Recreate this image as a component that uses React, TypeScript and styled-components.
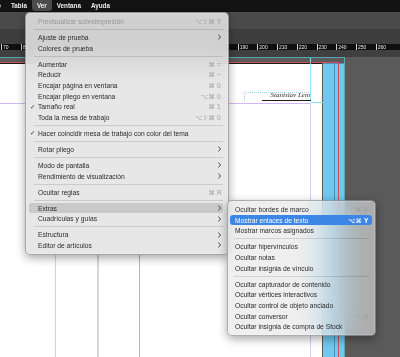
import React from 'react';
import styled, { createGlobalStyle } from 'styled-components';

const GlobalStyle = createGlobalStyle`
  html, body { margin: 0; padding: 0; }
  body {
    width: 400px;
    height: 357px;
    overflow: hidden;
    background: #5a5a5a;
    font-family: "Liberation Sans", Arial, "DejaVu Sans", sans-serif;
  }
`;

type Entry =
  | { sep: true }
  | {
      label: string;
      keys?: [string, string];
      sub?: boolean;
      check?: boolean;
      disabled?: boolean;
      active?: boolean;
    };

const SEP: Entry = { sep: true };

const viewMenu: Entry[] = [
  { label: 'Previsualizar sobreimpresión', keys: ['⌥⇧⌘', 'Y'], disabled: true },
  SEP,
  { label: 'Ajuste de prueba', sub: true },
  { label: 'Colores de prueba' },
  SEP,
  { label: 'Aumentar', keys: ['⌘', '='] },
  { label: 'Reducir', keys: ['⌘', '−'] },
  { label: 'Encajar página en ventana', keys: ['⌘', '0'] },
  { label: 'Encajar pliego en ventana', keys: ['⌥⌘', '0'] },
  { label: 'Tamaño real', keys: ['⌘', '1'], check: true },
  { label: 'Toda la mesa de trabajo', keys: ['⌥⇧⌘', '0'] },
  SEP,
  { label: 'Hacer coincidir mesa de trabajo con color del tema', check: true },
  SEP,
  { label: 'Rotar pliego', sub: true },
  SEP,
  { label: 'Modo de pantalla', sub: true },
  { label: 'Rendimiento de visualización', sub: true },
  SEP,
  { label: 'Ocultar reglas', keys: ['⌘', 'R'] },
  SEP,
  { label: 'Extras', sub: true, active: true },
  { label: 'Cuadrículas y guías', sub: true },
  SEP,
  { label: 'Estructura', sub: true },
  { label: 'Editor de artículos', sub: true },
];

const extrasMenu: Entry[] = [
  { label: 'Ocultar bordes de marco', keys: ['^⌘', 'H'] },
  { label: 'Mostrar enlaces de texto', keys: ['⌥⌘', 'Y'], active: true },
  { label: 'Mostrar marcos asignados' },
  SEP,
  { label: 'Ocultar hipervínculos' },
  { label: 'Ocultar notas' },
  { label: 'Ocultar insignia de vínculo' },
  SEP,
  { label: 'Ocultar capturador de contenido' },
  { label: 'Ocultar vértices interactivos' },
  { label: 'Ocultar control de objeto anclado' },
  { label: 'Ocultar conversor', keys: ['⌥', 'B'] },
  { label: 'Ocultar insignia de compra de Stock' },
];

// ruler labels; the ones hidden under the open menu are left blank
const rulerMarks = Array.from({ length: 20 }, (_, i) => 70 + i * 10).map(m =>
  m > 80 && m < 190 ? '' : String(m)
);

// guides on the page: x, y (page coords), width, height, colour
const guides = [
  { x: 0, y: 39, w: 310, h: 1, c: '#d3b9f1' },
  { x: 55, y: 39, w: 1, h: 400, c: '#c6d4fb' },
  { x: 97, y: 39, w: 2, h: 400, c: '#d6d6d6' },
  { x: 139, y: 39, w: 1, h: 400, c: '#bda4ef' },
  { x: 310, y: 39, w: 1, h: 400, c: '#dacdf4' },
  { x: 310, y: -6, w: 1, h: 44, c: '#8fe3f2' },
  { x: 311, y: 38, w: 24, h: 1, c: '#8fe3f2' },
];

const Screen = styled.div`
  position: relative;
  width: 400px;
  height: 357px;
  display: flex;
  flex-direction: column;
  overflow: hidden;
`;

const MenuBar = styled.div`
  flex: none;
  height: 12px;
  background: #131313;
  display: flex;
  align-items: flex-start;
`;

const BarItem = styled.div<{ $active?: boolean }>`
  height: 11px;
  line-height: 11px;
  padding: 0 5px;
  font-size: 6.3px;
  font-weight: 700;
  color: #ededed;
  border-radius: 0 0 3px 3px;
  background: ${p => (p.$active ? '#4c4c4c' : 'transparent')};
  &:first-child {
    margin-left: -24px;
  }
`;

const ControlBar = styled.div`
  flex: none;
  height: 17px;
  background: #4b4b4b;
`;

const ToolStrip = styled.div`
  flex: none;
  height: 15px;
  background: #3e3e3e;
`;

const Ruler = styled.div`
  flex: none;
  height: 13px;
  background: #3f3f3f;
  display: flex;
  flex-direction: column;
`;

const RulerNumbers = styled.div`
  height: 6px;
  background: #0f0f0f;
  display: flex;
  padding-left: 1px;
`;

const RulerCell = styled.div`
  flex: none;
  width: 19.72px;
  box-sizing: border-box;
  border-left: 1px solid #cfcfcf;
  padding-left: 1px;
  font-size: 5px;
  line-height: 6px;
  color: #e8e8e8;
`;

const Canvas = styled.div`
  position: relative;
  flex: 1;
  background: #5a5a5a;
`;

const Slug = styled.div`
  position: absolute;
  left: -20px;
  top: 0;
  width: 365px;
  bottom: 0;
  border-top: 1px solid #5fa6b4;
  border-right: 1px solid #5fa6b4;
  box-sizing: border-box;
`;

const Bleed = styled.div`
  position: absolute;
  left: -20px;
  top: 5px;
  width: 359px;
  bottom: 0;
  border-top: 1px solid #c9505e;
  border-right: 1px solid #c9505e;
  box-sizing: border-box;
  z-index: 2;
`;

const Page = styled.div`
  position: absolute;
  left: 0;
  top: 6px;
  width: 322px;
  bottom: 0;
  background: #ffffff;
  border-top: 1px solid #1c1c1c;
  box-sizing: border-box;
`;

const BlueFrame = styled.div`
  position: absolute;
  left: 323px;
  top: 6px;
  width: 21px;
  bottom: 0;
  background: #70c7ef;
  border-top: 1px solid #4f8fb0;
  box-sizing: border-box;
  &::after {
    content: '';
    position: absolute;
    left: 11px;
    top: 0;
    bottom: 0;
    width: 1px;
    background: #4f93b8;
  }
`;

const Guide = styled.div`
  position: absolute;
`;

const TextFrame = styled.div`
  position: absolute;
  left: 244px;
  top: 28px;
  width: 67px;
  height: 9px;
  border-top: 1px dotted #9fd2ea;
  border-left: 1px dotted #9fd2ea;
  box-sizing: border-box;
  display: flex;
  justify-content: flex-end;
  align-items: flex-end;
`;

const Author = styled.span`
  font-family: "Liberation Serif", "Times New Roman", serif;
  font-style: italic;
  font-size: 7px;
  line-height: 7px;
  color: #2e2e2e;
  padding: 0 1px 1px 0;
  border-bottom: 1px solid #1f1f1f;
  width: 48px;
  text-align: right;
`;

const Menu = styled.div<{ $left: number; $top: number; $width: number; $alpha: number }>`
  position: absolute;
  left: ${p => p.$left}px;
  top: ${p => p.$top}px;
  width: ${p => p.$width}px;
  padding: 3px 0;
  box-sizing: border-box;
  border-radius: 5px;
  background: rgba(228, 228, 228, ${p => p.$alpha});
  backdrop-filter: blur(14px) saturate(1.2);
  -webkit-backdrop-filter: blur(14px) saturate(1.2);
  border: 0.5px solid rgba(0, 0, 0, 0.28);
  box-shadow: 0 3px 10px rgba(0, 0, 0, 0.35), inset 0 0 0 0.5px rgba(255, 255, 255, 0.35);
  z-index: 10;
`;

const Row = styled.div<{ $sub?: boolean; $active?: boolean; $disabled?: boolean }>`
  position: relative;
  height: 10.7px;
  display: flex;
  align-items: center;
  margin: ${p => (p.$sub ? '0 3px 0 2px' : '0 5px 0 3px')};
  padding: ${p => (p.$sub ? '0 3px 0 5px' : '0 1px 0 9px')};
  border-radius: 3px;
  font-size: 6.7px;
  white-space: nowrap;
  background: ${p => (p.$active ? (p.$sub ? '#3c86e6' : 'rgba(0,0,0,0.13)') : 'transparent')};
  color: ${p => (p.$sub && p.$active ? '#ffffff' : p.$disabled ? '#959595' : '#2a2a2a')};
`;

const Check = styled.span`
  position: absolute;
  left: 1px;
  font-size: 6.4px;
  font-weight: 700;
  color: #2a2a2a;
  font-family: "DejaVu Sans", sans-serif;
`;

const Keys = styled.span<{ $active?: boolean }>`
  margin-left: auto;
  display: flex;
  align-items: center;
  font-family: "DejaVu Sans", sans-serif;
  font-size: 6.2px;
  letter-spacing: 0.4px;
  color: ${p => (p.$active ? '#ffffff' : '#9c9c9c')};
  font-weight: ${p => (p.$active ? 700 : 400)};
`;

const KeyChar = styled.span`
  width: 5px;
  margin-left: 2px;
  text-align: left;
  font-family: "Liberation Sans", sans-serif;
  font-size: 6.6px;
`;

const Chevron = styled.svg`
  margin-left: auto;
  margin-right: 1px;
  width: 3px;
  height: 6px;
`;

const Separator = styled.div<{ $sub?: boolean }>`
  height: 5.3px;
  display: flex;
  align-items: center;
  margin: ${p => (p.$sub ? '0 6px' : '0 5px 0 8px')};
  &::after {
    content: '';
    flex: 1;
    height: 1px;
    background: rgba(0, 0, 0, 0.12);
  }
`;

function MenuList({ entries, sub }: { entries: Entry[]; sub?: boolean }) {
  return (
    <>
      {entries.map((e, i) => {
        if ('sep' in e) return <Separator key={i} $sub={sub} />;
        return (
          <Row key={i} $sub={sub} $active={e.active} $disabled={e.disabled}>
            {e.check && <Check>✓</Check>}
            {e.label}
            {e.keys && (
              <Keys $active={e.active}>
                {e.keys[0]}
                <KeyChar>{e.keys[1]}</KeyChar>
              </Keys>
            )}
            {e.sub && (
              <Chevron viewBox="0 0 3 6">
                <polyline points="0.4,0.5 2.5,3 0.4,5.5" fill="none" stroke="#3a3a3a" strokeWidth="0.9" />
              </Chevron>
            )}
          </Row>
        );
      })}
    </>
  );
}

export default function App() {
  return (
    <Screen>
      <GlobalStyle />
      <MenuBar>
        <BarItem>Objeto</BarItem>
        <BarItem>Tabla</BarItem>
        <BarItem $active>Ver</BarItem>
        <BarItem>Ventana</BarItem>
        <BarItem>Ayuda</BarItem>
      </MenuBar>
      <ControlBar />
      <ToolStrip />
      <Ruler>
        <RulerNumbers>
          {rulerMarks.map((m, i) => (
            <RulerCell key={i}>{m}</RulerCell>
          ))}
        </RulerNumbers>
      </Ruler>
      <Canvas>
        <Slug />
        <Page>
          {guides.map((g, i) => (
            <Guide
              key={i}
              style={{ left: g.x, top: g.y, width: g.w, height: g.h, background: g.c }}
            />
          ))}
          <TextFrame>
            <Author>Stanislav Lem</Author>
          </TextFrame>
        </Page>
        <BlueFrame />
        <Bleed />
      </Canvas>

      <Menu $left={25} $top={12} $width={204} $alpha={0.88}>
        <MenuList entries={viewMenu} />
      </Menu>
      <Menu $left={227} $top={200} $width={149} $alpha={0.6}>
        <MenuList entries={extrasMenu} sub />
      </Menu>
    </Screen>
  );
}
